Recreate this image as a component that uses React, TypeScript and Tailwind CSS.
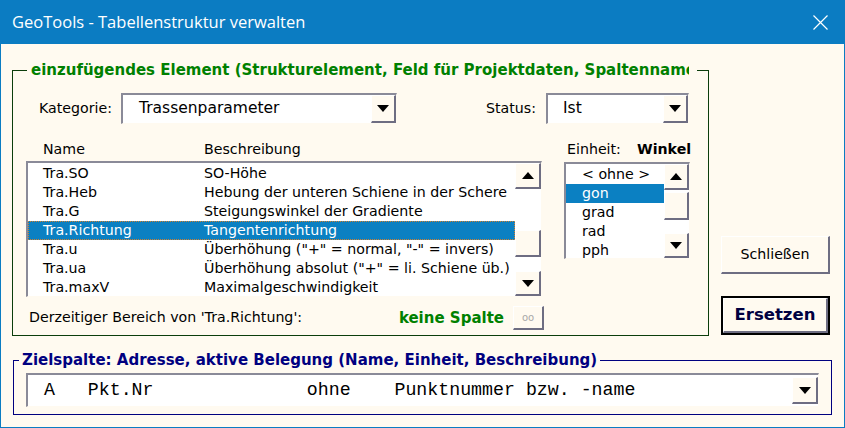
import React from 'react';

const ui = "font-['DejaVu_Sans','Liberation_Sans',sans-serif]";
const raised =
  'bg-[#fffaf0] border-t border-l border-t-white border-l-white border-r-2 border-b-2 border-r-[#6e6d82] border-b-[#6e6d82]';
const sunken =
  'bg-white border-t-2 border-l-2 border-t-[#8a8a98] border-l-[#8a8a98] border-r border-b border-r-[#fffaf0] border-b-[#fffaf0]';

const Arrow = ({ down = true }: { down?: boolean }) => (
  <svg width="12" height="7" viewBox="0 0 12 7">
    <path d={down ? 'M0 0H12L6 7Z' : 'M0 7H12L6 0Z'} fill="#000" />
  </svg>
);

const ScrollBtn = ({ down = false, h = 'h-[26px]' }: { down?: boolean; h?: string }) => (
  <div className={`${raised} ${h} w-full flex items-center justify-center`}>
    <Arrow down={down} />
  </div>
);

const Thumb = ({ h }: { h: string }) => <div className={`${raised} ${h} w-full`} />;

const Combo = ({ text, w, pl }: { text: string; w: string; pl: string }) => (
  <div className={`${sunken} ${w} h-[31px] flex items-stretch`}>
    <div className={`flex-1 flex items-center ${pl} text-[15.5px] text-black`}>{text}</div>
    <div className={`${raised} w-[25px] flex items-center justify-center`}>
      <Arrow />
    </div>
  </div>
);

const items: [string, string][] = [
  ['Tra.SO', 'SO-Höhe'],
  ['Tra.Heb', 'Hebung der unteren Schiene in der Schere'],
  ['Tra.G', 'Steigungswinkel der Gradiente'],
  ['Tra.Richtung', 'Tangentenrichtung'],
  ['Tra.u', 'Überhöhung ("+" = normal, "-" = invers)'],
  ['Tra.ua', 'Überhöhung absolut ("+" = li. Schiene üb.)'],
  ['Tra.maxV', 'Maximalgeschwindigkeit'],
];

const units = ['< ohne >', 'gon', 'grad', 'rad', 'pph'];

export default function App() {
  return (
    <div className={`w-[845px] h-[428px] flex flex-col bg-[#0b7cc2] ${ui}`}>
      {/* Title bar */}
      <div className="h-[44px] flex items-center justify-between pl-[12px] pr-[17px] text-white">
        <span className="font-['Open_Sans','Noto_Sans',sans-serif] text-[16.5px]">
          GeoTools - Tabellenstruktur verwalten
        </span>
        <svg width="15" height="15" viewBox="0 0 15 15">
          <path d="M0.5 0.5L14.5 14.5M14.5 0.5L0.5 14.5" stroke="#fff" strokeWidth="1.2" />
        </svg>
      </div>

      {/* Body */}
      <div className="flex-1 mx-px mb-px bg-[#fffaf0] flex flex-col text-[14.2px]">
        <div className="flex">
          {/* Frame 1 */}
          <div className="relative ml-[11px] mt-[26px] w-[697px] h-[266px] border border-[#0b3d0b]">
            <div className="absolute left-[14px] top-[-11px] w-[670px] h-[20px] bg-[#fffaf0] pl-[4px]">
              <div className="w-[658px] overflow-hidden whitespace-nowrap text-[15px] font-bold text-[#008000] leading-[20px]">
                einzufügendes Element (Strukturelement, Feld für Projektdaten, Spaltenname)
              </div>
            </div>

            {/* Row 1 */}
            <div className="mt-[22px] flex items-center h-[31px] text-black">
              <div className="w-[108px] pl-[26px]">Kategorie:</div>
              <Combo text="Trassenparameter" w="w-[276px]" pl="pl-[16px]" />
              <div className="w-[149px] text-right pr-[10px]">Status:</div>
              <Combo text="Ist" w="w-[143px]" pl="pl-[15px]" />
            </div>

            {/* Header row */}
            <div className="mt-[16px] h-[19px] flex items-center text-black">
              <div className="w-[191px] pl-[30px]">Name</div>
              <div className="w-[363px]">Beschreibung</div>
              <div className="w-[70px]">Einheit:</div>
              <div className="font-bold">Winkel</div>
            </div>

            {/* Lists */}
            <div className="mt-[2px] flex items-start">
              <div className={`${sunken} ml-[13px] w-[516px] h-[136px] flex`}>
                <div className="flex-1 pt-px text-black">
                  {items.map(([n, d], i) => (
                    <div
                      key={n}
                      className={`h-[19px] flex items-center ${
                        i === 3
                          ? 'bg-[#0b80c2] text-white border border-dotted border-[#d08030]'
                          : 'border border-transparent'
                      }`}
                    >
                      <div className="w-[175px] pl-[14px]">{n}</div>
                      <div className="whitespace-nowrap">{d}</div>
                    </div>
                  ))}
                </div>
                <div className="w-[26px] flex flex-col">
                  <ScrollBtn />
                  <div className="h-[41px]" />
                  <Thumb h="h-[27px]" />
                  <div className="flex-1" />
                  <ScrollBtn down h="h-[25px]" />
                </div>
              </div>

              <div className={`${sunken} ml-[22px] mt-px w-[126px] h-[97px] flex overflow-hidden`}>
                <div className="flex-1 pt-px text-black">
                  {units.map((u, i) => (
                    <div
                      key={u}
                      className={`h-[19px] flex items-center pl-[16px] ${i === 1 ? 'bg-[#0b80c2] text-white' : ''}`}
                    >
                      {u}
                    </div>
                  ))}
                </div>
                <div className="w-[25px] flex flex-col">
                  <ScrollBtn />
                  <div className="h-[2px]" />
                  <Thumb h="h-[28px]" />
                  <div className="flex-1" />
                  <ScrollBtn down h="h-[25px]" />
                </div>
              </div>
            </div>

            {/* Bottom row */}
            <div className="mt-[9px] w-[531px] h-[24px] flex items-center">
              <div className="flex-1 pl-[16px] text-black">Derzeitiger Bereich von 'Tra.Richtung':</div>
              <div className="font-bold text-[15px] text-[#008000]">keine Spalte</div>
              <div
                className={`${raised} ml-[9px] w-[31px] h-[24px] flex items-center justify-center text-[10px] text-[#a8a8a8]`}
              >
                oo
              </div>
            </div>
          </div>

          {/* Buttons */}
          <div className="ml-[12px] flex flex-col">
            <div className={`${raised} mt-[192px] w-[109px] h-[38px] flex items-center justify-center text-black`}>
              Schließen
            </div>
            <div className="mt-[22px] w-[109px] h-[39px] border-2 border-black">
              <div
                className={`${raised} h-full flex items-center justify-center text-[16.5px] font-bold text-[#000040]`}
              >
                Ersetzen
              </div>
            </div>
          </div>
        </div>

        {/* Frame 2 */}
        <div className="relative ml-[12px] mt-[24px] w-[819px] h-[55px] border border-[#000080]">
          <div className="absolute left-[5px] top-[-11px] h-[20px] bg-[#fffaf0] px-[3px] text-[15px] font-bold text-[#000080] leading-[20px] whitespace-nowrap">
            Zielspalte: Adresse, aktive Belegung (Name, Einheit, Beschreibung)
          </div>
          <div className={`${sunken} ml-[12px] mt-[12px] w-[793px] h-[34px] flex items-stretch`}>
            <div className="flex-1 flex items-center pl-[16px] whitespace-pre text-[18.25px] text-black font-['Liberation_Mono','Courier_New',monospace]">
              {'A   Pkt.Nr              ohne    Punktnummer bzw. -name'}
            </div>
            <div className={`${raised} w-[26px] my-[2px] flex items-center justify-center`}>
              <Arrow />
            </div>
          </div>
        </div>
      </div>
    </div>
  );
}
